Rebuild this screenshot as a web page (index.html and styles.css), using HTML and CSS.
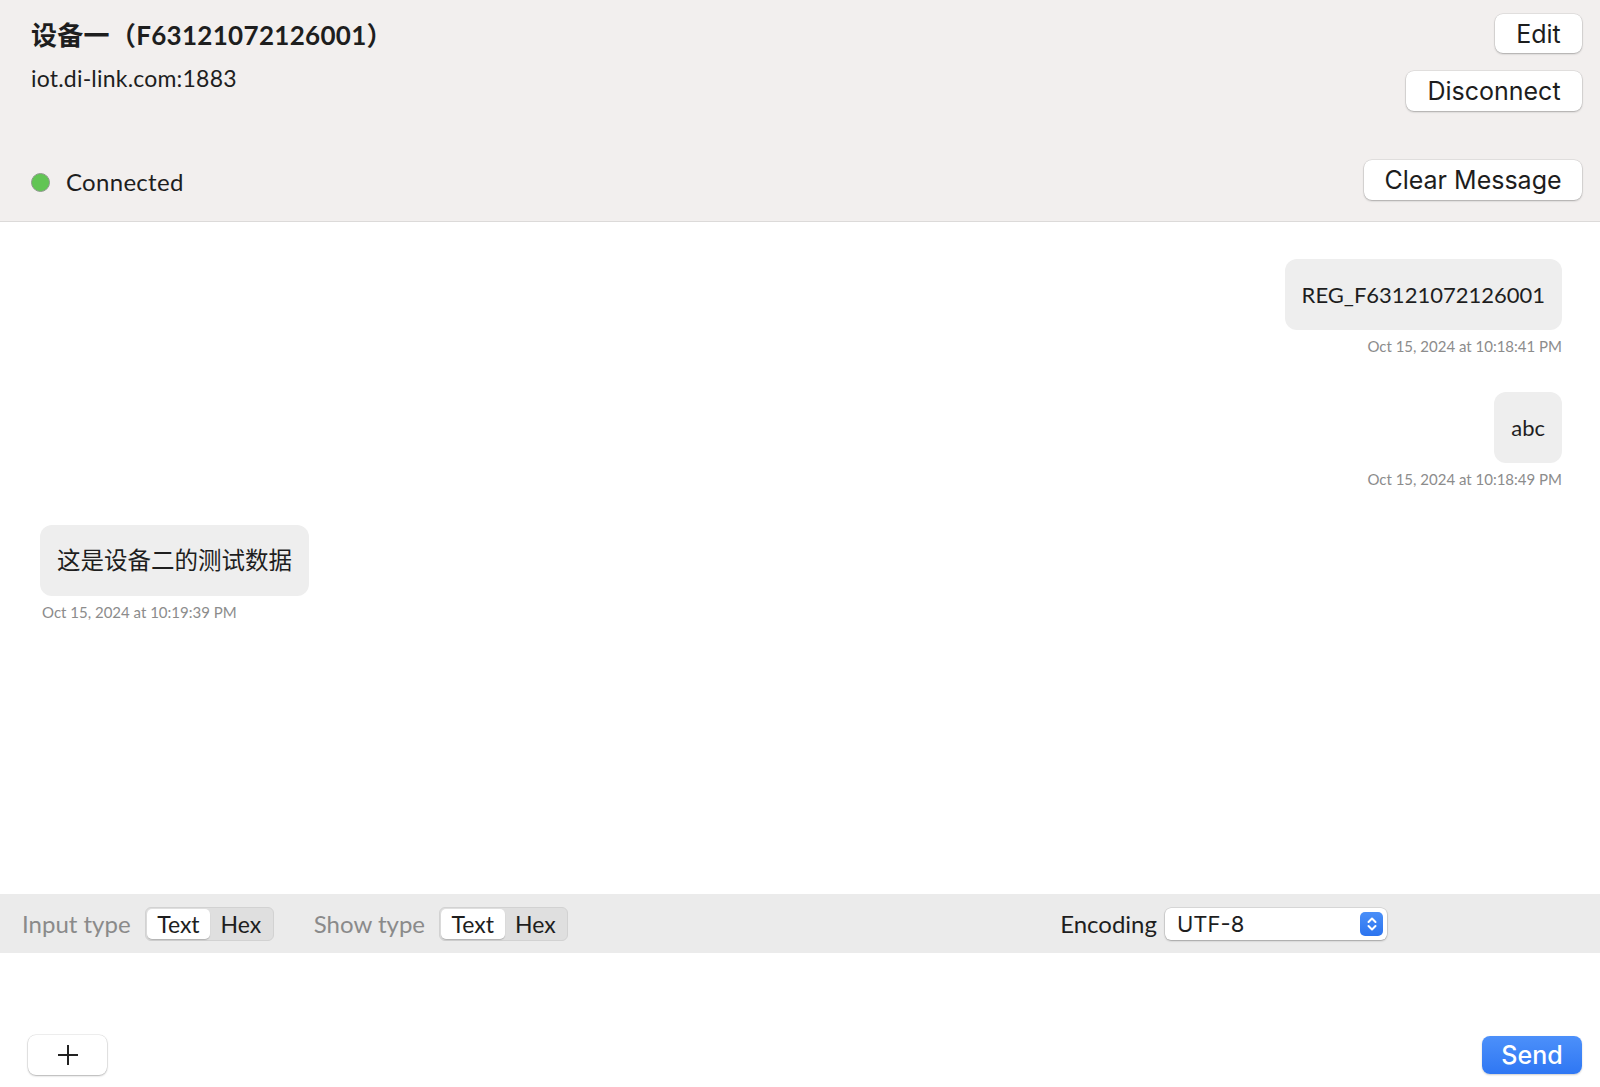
FILE: index.html
```html
<!DOCTYPE html>
<html lang="zh">

<head>
    <meta charset="UTF-8">
    <meta name="viewport" content="width=device-width, initial-scale=1.0">
    <title>设备一</title>
    <link rel="stylesheet" href="styles.css">
</head>

<body>
    <div id="header">
        <div class="device-info">
            <h1 class="device-name">设备一（F63121072126001）</h1>
            <div class="device-host">iot.di-link.com:1883</div>
            <div class="status">
                <span class="status-dot"></span>
                <span class="status-text">Connected</span>
            </div>
        </div>
        <div class="header-actions">
            <button class="mac-btn btn-edit">Edit</button>
            <button class="mac-btn btn-disconnect">Disconnect</button>
            <button class="mac-btn btn-clear">Clear Message</button>
        </div>
    </div>

    <div id="messages">
        <div class="msg msg-out">
            <div class="bubble">REG_F63121072126001</div>
            <div class="msg-time">Oct 15, 2024 at 10:18:41 PM</div>
        </div>
        <div class="msg msg-out">
            <div class="bubble">abc</div>
            <div class="msg-time">Oct 15, 2024 at 10:18:49 PM</div>
        </div>
        <div class="msg msg-in">
            <div class="bubble bubble-cjk">这是设备二的测试数据</div>
            <div class="msg-time">Oct 15, 2024 at 10:19:39 PM</div>
        </div>
    </div>

    <div id="toolbar">
        <span class="tool-label">Input type</span>
        <div class="segmented">
            <span class="segment active">Text</span>
            <span class="segment">Hex</span>
        </div>
        <span class="tool-label show-label">Show type</span>
        <div class="segmented">
            <span class="segment active">Text</span>
            <span class="segment">Hex</span>
        </div>
        <span class="encoding-label">Encoding</span>
        <div class="select-box">
            <span class="select-value">UTF-8</span>
            <span class="select-arrows">
                <svg width="14" height="18" viewBox="0 0 14 18">
                    <path d="M3.5 7 L7 3.5 L10.5 7" fill="none" stroke="#fff" stroke-width="2" stroke-linecap="round" stroke-linejoin="round" />
                    <path d="M3.5 11 L7 14.5 L10.5 11" fill="none" stroke="#fff" stroke-width="2" stroke-linecap="round" stroke-linejoin="round" />
                </svg>
            </span>
        </div>
    </div>

    <div id="composer">
        <div class="composer-input"></div>
        <div class="composer-actions">
            <button class="mac-btn btn-add">
                <svg width="22" height="22" viewBox="0 0 22 22">
                    <path d="M11 1 V21 M1 11 H21" stroke="#222" stroke-width="2" />
                </svg>
            </button>
            <button class="btn-send">Send</button>
        </div>
    </div>
</body>

</html>
```

FILE: styles.css
```css
body {
    margin: 0;
    padding: 0;
    height: 100vh;
    display: flex;
    flex-direction: column;
    background-color: #ffffff;
    font-family: Lato, "Noto Sans CJK SC", sans-serif;
    color: #1e1e1e;
    overflow: hidden;
}

#header {
    height: 221px;
    flex-shrink: 0;
    display: flex;
    justify-content: space-between;
    background-color: #f2efee;
    border-bottom: 1px solid #dcdad9;
    padding: 0 18px 0 31px;
}

.device-info {
    display: flex;
    flex-direction: column;
}

.device-name {
    margin: 19px 0 0 0;
    font-size: 26px;
    font-weight: bold;
    line-height: 32px;
    letter-spacing: 0.3px;
    font-family: Lato, "Noto Sans CJK SC", sans-serif;
}

.device-host {
    margin-top: 13px;
    font-size: 23px;
    line-height: 28px;
    letter-spacing: 0.2px;
}

.status {
    margin-top: auto;
    margin-bottom: 24px;
    display: flex;
    align-items: center;
}

.status-dot {
    width: 17px;
    height: 17px;
    border-radius: 50%;
    background-color: #62c554;
    border: 1px solid #8f9a8d;
    margin-right: 16px;
}

.status-text {
    font-size: 24px;
    line-height: 30px;
    letter-spacing: 0.3px;
}

.header-actions {
    display: flex;
    flex-direction: column;
    align-items: flex-end;
    padding-top: 14px;
}

.mac-btn {
    font-family: Inter, "Liberation Sans", sans-serif;
    font-size: 25px;
    color: #1d1d1d;
    background: #ffffff;
    border: none;
    border-radius: 8px;
    box-shadow: 0 0 0 0.5px rgba(0, 0, 0, 0.12), 0 1px 2px rgba(0, 0, 0, 0.25);
    height: 40px;
    padding: 0 18px;
    cursor: pointer;
}

.btn-edit {
    height: 39px;
    width: 87px;
}

.btn-disconnect {
    margin-top: 18px;
    width: 176px;
}

.btn-clear {
    margin-top: 49px;
    width: 218px;
}

#messages {
    flex: 1;
    padding: 37px 38px 0 40px;
    overflow: hidden;
    display: flex;
    flex-direction: column;
}

.msg {
    display: flex;
    flex-direction: column;
    margin-bottom: 37px;
}

.msg-out {
    align-items: flex-end;
}

.msg-in {
    align-items: flex-start;
}

.bubble {
    background-color: #eeeeee;
    border-radius: 12px;
    padding: 20px 17px;
    font-size: 22px;
    line-height: 31px;
}

.bubble-cjk {
    font-size: 23.5px;
}

.msg-time {
    margin-top: 8px;
    font-size: 15px;
    line-height: 17px;
    color: #8c8c8c;
}

.msg-in .msg-time {
    margin-left: 2px;
}

#toolbar {
    height: 59px;
    flex-shrink: 0;
    display: flex;
    align-items: center;
    background-color: #ebebeb;
    padding: 0 22px;
}

.tool-label {
    font-size: 24px;
    color: #8a8a8a;
    margin-right: 14px;
}

.show-label {
    margin-left: 40px;
}

.segmented {
    display: flex;
    height: 34px;
    padding: 1px;
    box-sizing: border-box;
    background-color: #dfdfdf;
    border: 1px solid #d2d2d2;
    border-radius: 6px;
}

.segment {
    font-size: 23px;
    line-height: 30px;
    padding: 0 10.5px;
    color: #1e1e1e;
}

.segment.active {
    background: #ffffff;
    border-radius: 5px;
    box-shadow: 0 1px 1px rgba(0, 0, 0, 0.2);
}

.encoding-label {
    margin-left: auto;
    font-size: 24px;
    color: #1e1e1e;
    margin-right: 8px;
}

.select-box {
    width: 222px;
    height: 32px;
    box-sizing: border-box;
    margin-right: 191px;
    display: flex;
    align-items: center;
    justify-content: space-between;
    background: #ffffff;
    border-radius: 6px;
    box-shadow: 0 0 0 0.5px rgba(0, 0, 0, 0.15), 0 1px 2px rgba(0, 0, 0, 0.25);
    padding: 0 4px 0 12px;
}

.select-value {
    font-family: Inter, "Liberation Sans", sans-serif;
    font-size: 22px;
}

.select-arrows {
    width: 23px;
    height: 24px;
    border-radius: 5px;
    background: linear-gradient(#4a8ff8, #2c74ef);
    display: flex;
    align-items: center;
    justify-content: center;
}

#composer {
    height: 134px;
    flex-shrink: 0;
    display: flex;
    flex-direction: column;
}

.composer-input {
    flex: 1;
}

.composer-actions {
    display: flex;
    justify-content: space-between;
    align-items: center;
    padding: 0 18px 12px 28px;
}

.btn-add {
    width: 79px;
    height: 40px;
    padding: 0;
    display: flex;
    align-items: center;
    justify-content: center;
}

.btn-send {
    width: 100px;
    height: 38px;
    font-family: Inter, "Liberation Sans", sans-serif;
    font-size: 25px;
    font-weight: 500;
    color: #ffffff;
    background: linear-gradient(#4c90fa, #2f77f3);
    border: none;
    border-radius: 8px;
    box-shadow: 0 1px 2px rgba(0, 0, 0, 0.2);
    cursor: pointer;
}
```
